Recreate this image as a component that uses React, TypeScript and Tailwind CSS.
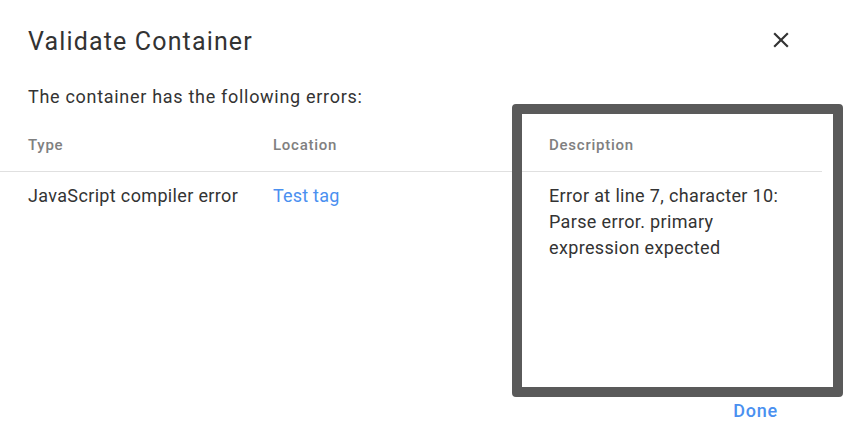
import React from "react";

export default function App() {
  return (
    <div
      className="relative w-[854px] h-[448px] bg-white overflow-hidden text-[#333333]"
      style={{ fontFamily: "Roboto, 'Noto Sans', sans-serif" }}
    >
      <div className="relative w-[822px] h-[448px] bg-white">
        <div className="flex items-center justify-between pl-[28px] pr-[28px] pt-[27px] h-[57px]">
          <h1 className="text-[25px] leading-[30px] tracking-[1.15px] text-[#333333]">Validate Container</h1>
          <svg width="26" height="26" viewBox="0 0 24 24" className="text-[#333] mt-[-4px]">
            <path d="M19 6.41 17.59 5 12 10.59 6.41 5 5 6.41 10.59 12 5 17.59 6.41 19 12 13.41 17.59 19 19 17.59 13.41 12z" fill="currentColor" />
          </svg>
        </div>
        <p className="pl-[28px] mt-[28px] text-[18px] leading-[24px] tracking-[0.7px] text-[#333]">
          The container has the following errors:
        </p>
        <div className="mt-[26px] grid grid-cols-[245px_276px_1fr] pl-[28px] h-[37px] border-b border-[#e0e0e0] items-start text-[15px] font-medium text-[#808080] tracking-[0.75px]">
          <div className="leading-[20px]">Type</div>
          <div className="leading-[20px]">Location</div>
          <div className="leading-[20px]">Description</div>
        </div>
        <div className="grid grid-cols-[245px_276px_1fr] pl-[28px] pt-[11px] text-[18px] leading-[26px] tracking-[0.35px] text-[#333]">
          <div>JavaScript compiler error</div>
          <div className="text-[#4a90f0] tracking-[0.2px]">Test tag</div>
          <div>
            Error at line 7, character 10:
            <br />
            Parse error. primary
            <br />
            expression expected
          </div>
        </div>
        <div className="absolute right-[44px] top-[399px] text-[18px] leading-[24px] tracking-[0.8px] font-medium text-[#4a90f0]">Done</div>
      </div>
      <div className="absolute left-[512px] top-[104px] w-[331px] h-[293px] border-[10px] border-[#5a5a5a] rounded-[4px]" />
    </div>
  );
}
